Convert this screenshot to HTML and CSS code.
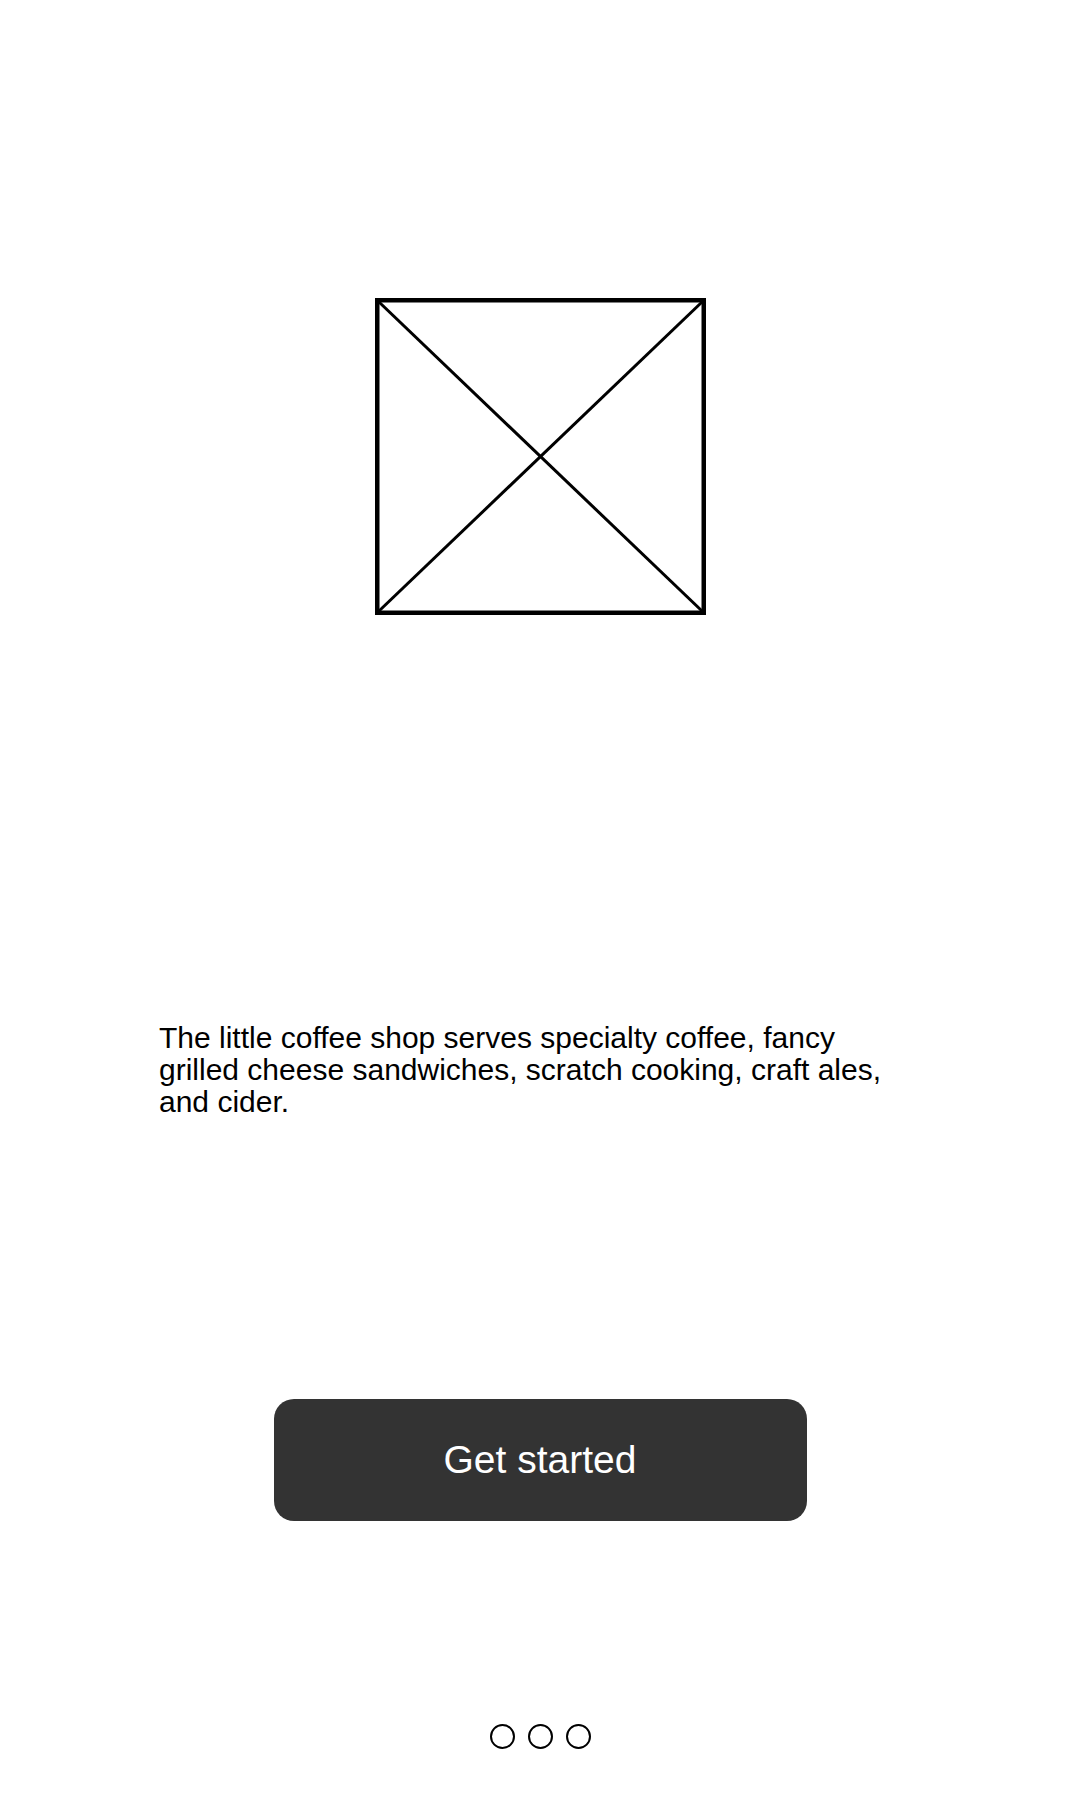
FILE: index.html
```html
<!DOCTYPE html>
<html lang="en">
<head>
<meta charset="utf-8">
<title>Welcome</title>
<link rel="stylesheet" href="styles.css">
</head>
<body>
<main class="screen">
  <div class="hero">
    <svg class="placeholder" width="331" height="317" viewBox="0 0 331 317" xmlns="http://www.w3.org/2000/svg">
      <line x1="4" y1="4" x2="327" y2="313" stroke="#000" stroke-width="3"/>
      <line x1="327" y1="4" x2="4" y2="313" stroke="#000" stroke-width="3"/>
      <rect x="2.25" y="2.25" width="326.5" height="312.5" fill="none" stroke="#000" stroke-width="4.5"/>
    </svg>
  </div>
  <p class="intro">The little coffee shop serves specialty coffee, fancy grilled cheese sandwiches, scratch cooking, craft ales, and cider.</p>
  <button class="cta" type="button">Get started</button>
  <div class="pager">
    <span class="dot"></span>
    <span class="dot"></span>
    <span class="dot"></span>
  </div>
</main>
</body>
</html>
```

FILE: styles.css
```css
html, body {
  margin: 0;
  padding: 0;
  background: #fff;
}

body {
  font-family: "Liberation Sans", Arial, sans-serif;
  color: #000;
}

.screen {
  width: 1080px;
  height: 1800px;
  display: flex;
  flex-direction: column;
  align-items: center;
}

.hero {
  margin-top: 298px;
  width: 331px;
  height: 317px;
}

.placeholder {
  display: block;
}

.intro {
  align-self: stretch;
  margin: 407px 0 0 0;
  padding: 0 170px 0 159px;
  font-size: 30px;
  line-height: 32px;
}

.cta {
  margin-top: 281px;
  width: 533px;
  height: 122px;
  border: none;
  border-radius: 20px;
  background: #333333;
  color: #fff;
  font-family: "Liberation Sans", Arial, sans-serif;
  font-size: 39px;
  padding: 0;
}

.pager {
  margin-top: 203px;
  display: flex;
  gap: 13px;
}

.dot {
  width: 21px;
  height: 21px;
  border: 2.75px solid #000;
  border-radius: 50%;
}
```
